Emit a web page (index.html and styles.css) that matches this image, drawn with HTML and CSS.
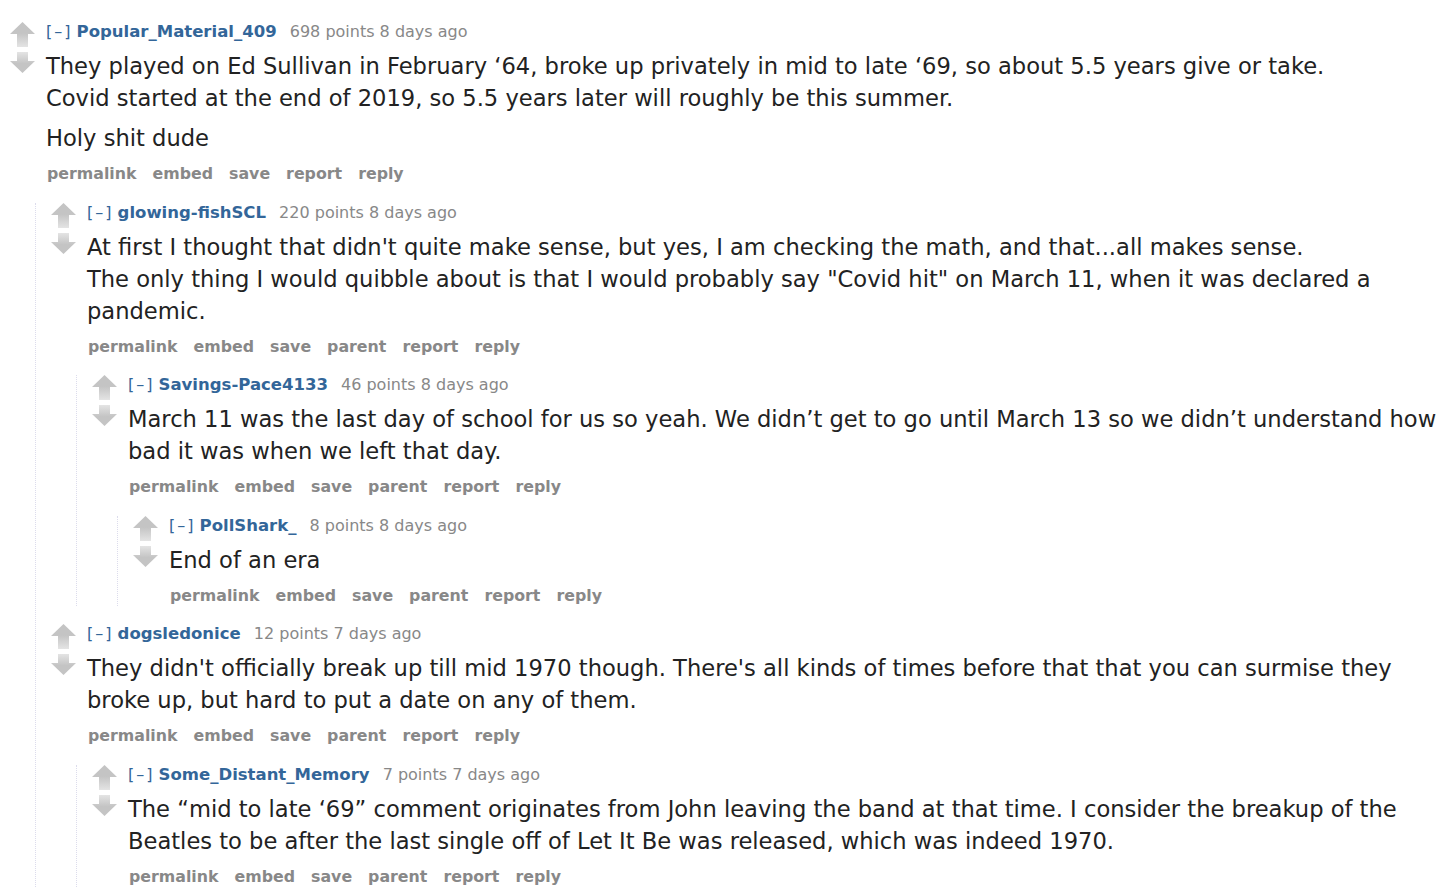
FILE: index.html
```html
<!DOCTYPE html>
<html lang="en">
<head>
<meta charset="utf-8">
<title>Comments</title>
<link rel="stylesheet" href="styles.css">
</head>
<body>
<svg class="defs" width="0" height="0" aria-hidden="true">
  <defs>
    <linearGradient id="gu" x1="0" y1="0" x2="0" y2="1"><stop offset="0.45" stop-color="#c4c4c4"/><stop offset="1" stop-color="#e4e4e4"/></linearGradient>
    <linearGradient id="gd" x1="0" y1="1" x2="0" y2="0"><stop offset="0.45" stop-color="#c4c4c4"/><stop offset="1" stop-color="#e4e4e4"/></linearGradient>
  </defs>
</svg>
<div class="commentarea">

  <div class="comment">
    <div class="row">
      <div class="midcol">
        <svg class="arrow up" viewBox="0 0 25 25" width="25" height="25"><polygon points="12.5,0 25,12 18,12 18,25 7,25 7,12 0,12" fill="url(#gu)"/></svg>
        <svg class="arrow down" viewBox="0 0 25 21" width="25" height="21"><polygon points="12.5,21 25,9 18,9 18,0 7,0 7,9 0,9" fill="url(#gd)"/></svg>
      </div>
      <div class="entry">
        <p class="tagline"><span class="expand">[–]</span> <a class="author">Popular_Material_409</a> <span class="score">698 points</span> <span class="time">8 days ago</span></p>
        <div class="md">
          <p>They played on Ed Sullivan in February ‘64, broke up privately in mid to late ‘69, so about 5.5 years give or take.<br>Covid started at the end of 2019, so 5.5 years later will roughly be this summer.</p>
          <p>Holy shit dude</p>
        </div>
        <ul class="buttons"><li>permalink</li><li>embed</li><li>save</li><li>report</li><li>reply</li></ul>
      </div>
    </div>
    <div class="child">

      <div class="comment">
        <div class="row">
          <div class="midcol">
            <svg class="arrow up" viewBox="0 0 25 25" width="25" height="25"><polygon points="12.5,0 25,12 18,12 18,25 7,25 7,12 0,12" fill="url(#gu)"/></svg>
            <svg class="arrow down" viewBox="0 0 25 21" width="25" height="21"><polygon points="12.5,21 25,9 18,9 18,0 7,0 7,9 0,9" fill="url(#gd)"/></svg>
          </div>
          <div class="entry">
            <p class="tagline"><span class="expand">[–]</span> <a class="author">glowing-fishSCL</a> <span class="score">220 points</span> <span class="time">8 days ago</span></p>
            <div class="md">
              <p>At first I thought that didn't quite make sense, but yes, I am checking the math, and that...all makes sense.<br>The only thing I would quibble about is that I would probably say "Covid hit" on March 11, when it was declared a pandemic.</p>
            </div>
            <ul class="buttons"><li>permalink</li><li>embed</li><li>save</li><li>parent</li><li>report</li><li>reply</li></ul>
          </div>
        </div>
        <div class="child">

          <div class="comment">
            <div class="row">
              <div class="midcol">
                <svg class="arrow up" viewBox="0 0 25 25" width="25" height="25"><polygon points="12.5,0 25,12 18,12 18,25 7,25 7,12 0,12" fill="url(#gu)"/></svg>
                <svg class="arrow down" viewBox="0 0 25 21" width="25" height="21"><polygon points="12.5,21 25,9 18,9 18,0 7,0 7,9 0,9" fill="url(#gd)"/></svg>
              </div>
              <div class="entry">
                <p class="tagline"><span class="expand">[–]</span> <a class="author">Savings-Pace4133</a> <span class="score">46 points</span> <span class="time">8 days ago</span></p>
                <div class="md">
                  <p>March 11 was the last day of school for us so yeah. We didn’t get to go until March 13 so we didn’t understand how bad it was when we left that day.</p>
                </div>
                <ul class="buttons"><li>permalink</li><li>embed</li><li>save</li><li>parent</li><li>report</li><li>reply</li></ul>
              </div>
            </div>
            <div class="child">

              <div class="comment">
                <div class="row">
                  <div class="midcol">
                    <svg class="arrow up" viewBox="0 0 25 25" width="25" height="25"><polygon points="12.5,0 25,12 18,12 18,25 7,25 7,12 0,12" fill="url(#gu)"/></svg>
                    <svg class="arrow down" viewBox="0 0 25 21" width="25" height="21"><polygon points="12.5,21 25,9 18,9 18,0 7,0 7,9 0,9" fill="url(#gd)"/></svg>
                  </div>
                  <div class="entry">
                    <p class="tagline"><span class="expand">[–]</span> <a class="author">PollShark_</a> <span class="score">8 points</span> <span class="time">8 days ago</span></p>
                    <div class="md">
                      <p>End of an era</p>
                    </div>
                    <ul class="buttons"><li>permalink</li><li>embed</li><li>save</li><li>parent</li><li>report</li><li>reply</li></ul>
                  </div>
                </div>
              </div>

            </div>
          </div>

        </div>
      </div>

      <div class="comment">
        <div class="row">
          <div class="midcol">
            <svg class="arrow up" viewBox="0 0 25 25" width="25" height="25"><polygon points="12.5,0 25,12 18,12 18,25 7,25 7,12 0,12" fill="url(#gu)"/></svg>
            <svg class="arrow down" viewBox="0 0 25 21" width="25" height="21"><polygon points="12.5,21 25,9 18,9 18,0 7,0 7,9 0,9" fill="url(#gd)"/></svg>
          </div>
          <div class="entry">
            <p class="tagline"><span class="expand">[–]</span> <a class="author">dogsledonice</a> <span class="score">12 points</span> <span class="time">7 days ago</span></p>
            <div class="md">
              <p>They didn't officially break up till mid 1970 though. There's all kinds of times before that that you can surmise they broke up, but hard to put a date on any of them.</p>
            </div>
            <ul class="buttons"><li>permalink</li><li>embed</li><li>save</li><li>parent</li><li>report</li><li>reply</li></ul>
          </div>
        </div>
        <div class="child">

          <div class="comment">
            <div class="row">
              <div class="midcol">
                <svg class="arrow up" viewBox="0 0 25 25" width="25" height="25"><polygon points="12.5,0 25,12 18,12 18,25 7,25 7,12 0,12" fill="url(#gu)"/></svg>
                <svg class="arrow down" viewBox="0 0 25 21" width="25" height="21"><polygon points="12.5,21 25,9 18,9 18,0 7,0 7,9 0,9" fill="url(#gd)"/></svg>
              </div>
              <div class="entry">
                <p class="tagline"><span class="expand">[–]</span> <a class="author">Some_Distant_Memory</a> <span class="score">7 points</span> <span class="time">7 days ago</span></p>
                <div class="md">
                  <p>The “mid to late ‘69” comment originates from John leaving the band at that time. I consider the breakup of the Beatles to be after the last single off of Let It Be was released, which was indeed 1970.</p>
                </div>
                <ul class="buttons"><li>permalink</li><li>embed</li><li>save</li><li>parent</li><li>report</li><li>reply</li></ul>
              </div>
            </div>
          </div>

        </div>
      </div>

    </div>
  </div>

</div>
</body>
</html>
```

FILE: styles.css
```css
html, body {
  margin: 0;
  padding: 0;
  background: #ffffff;
}

body {
  font-family: "DejaVu Sans", Verdana, sans-serif;
  color: #222222;
  overflow: hidden;
  height: 894px;
}

.defs {
  position: absolute;
  width: 0;
  height: 0;
}

.commentarea {
  padding: 22px 4px 0 10px;
}

.comment {
  margin-top: 18.6px;
}

.commentarea > .comment {
  margin-top: 0;
}

.row {
  display: flex;
  align-items: flex-start;
}

.midcol {
  flex: none;
  width: 36px;
  display: flex;
  flex-direction: column;
  margin-top: 0;
}

.arrow {
  display: block;
}

.arrow.down {
  margin-top: 5px;
}

.entry {
  flex: 1;
  min-width: 0;
}

.tagline {
  margin: 0;
  font-size: 16px;
  line-height: 20px;
  color: #888888;
  white-space: nowrap;
}

.expand {
  color: #336699;
  letter-spacing: 2px;
  margin-right: -1px;
}

.author {
  color: #336699;
  font-weight: bold;
  font-size: 16.5px;
  margin-right: 8px;
}

.md {
  margin-top: 8px;
  font-size: 22.6px;
  line-height: 32px;
  color: #222222;
}

.md p {
  margin: 0 0 8px 0;
}

.md p:last-child {
  margin-bottom: 0;
}

.buttons {
  list-style: none;
  margin: 10px 0 0 1px;
  padding: 0;
  display: flex;
  gap: 16px;
  font-size: 15.8px;
  line-height: 20px;
  font-weight: bold;
  color: #888888;
}

.child {
  margin-left: 25px;
  border-left: 1px dotted #dcdcec;
  padding-left: 15px;
}
```
